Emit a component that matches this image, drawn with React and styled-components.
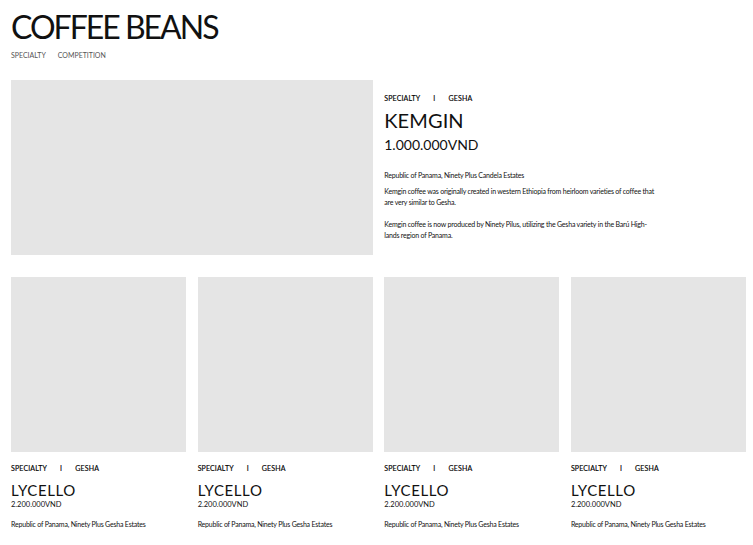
import React from "react";
import styled, { createGlobalStyle } from "styled-components";

const GlobalStyle = createGlobalStyle`
  * { box-sizing: border-box; }
  body {
    margin: 0;
    background: #fff;
    color: #111;
    font-family: Lato, "Noto Sans", sans-serif;
  }
`;

const Page = styled.div`
  padding: 0 7px 20px 11px;
`;

const Title = styled.h1`
  margin: 0;
  padding-top: 8px;
  font-size: 32px;
  line-height: 38px;
  font-weight: 400;
  letter-spacing: -2px;
`;

const Nav = styled.nav`
  display: flex;
  gap: 12px;
  margin-top: 5px;
  font-size: 7px;
  color: #555;
  text-transform: uppercase;
`;

const Grid = styled.div`
  display: grid;
  grid-template-columns: repeat(4, 1fr);
  column-gap: 11.5px;
  row-gap: 22px;
  margin-top: 21px;
`;

const Image = styled.div`
  background: #e5e5e5;
  aspect-ratio: ${(p) => (p.$wide ? "361 / 175" : "1 / 1")};
  grid-column: ${(p) => (p.$wide ? "span 2" : "auto")};
`;

const Detail = styled.div`
  grid-column: span 2;
  padding-top: 13px;
`;

const Tags = styled.div`
  display: flex;
  gap: 13px;
  font-size: 7px;
  font-weight: 400;
  color: #000;
  text-transform: uppercase;
  line-height: 10px;
  letter-spacing: 0.15px;
  -webkit-text-stroke: 0.15px #000;
`;

const Name = styled.h2`
  margin: ${(p) => (p.$big ? "5px 0 0" : "9px 0 0")};
  font-size: ${(p) => (p.$big ? "20px" : "15px")};
  line-height: ${(p) => (p.$big ? "24px" : "17px")};
  font-weight: 400;
  letter-spacing: ${(p) => (p.$big ? "0.1px" : "0.6px")};
`;

const Price = styled.div`
  margin-top: ${(p) => (p.$big ? "4px" : "1px")};
  font-size: ${(p) => (p.$big ? "14px" : "7.5px")};
  line-height: ${(p) => (p.$big ? "18px" : "10px")};
`;

const Text = styled.div`
  max-width: 274px;
  margin-top: ${(p) => p.$top || "0"};
  font-size: 7px;
  line-height: 11px;
  letter-spacing: -0.2px;

  p {
    margin: 0 0 11px;
  }
  p:first-child {
    margin-bottom: 5px;
  }
  p:last-child {
    margin-bottom: 0;
  }
`;

const Card = styled.div`
  display: flex;
  flex-direction: column;
`;

const CardBody = styled.div`
  padding-top: 11px;
`;

const products = [1, 2, 3, 4].map((id) => ({
  id,
  name: "LYCELLO",
  price: "2.200.000VND",
  origin: "Republic of Panama, Ninety Plus Gesha Estates",
}));

const TagRow = () => (
  <Tags>
    <span>Specialty</span>
    <span>I</span>
    <span>Gesha</span>
  </Tags>
);

export default function App() {
  return (
    <Page>
      <GlobalStyle />
      <Title>COFFEE BEANS</Title>
      <Nav>
        <span>Specialty</span>
        <span>Competition</span>
      </Nav>
      <Grid>
        <Image $wide />
        <Detail>
          <TagRow />
          <Name $big>KEMGIN</Name>
          <Price $big>1.000.000VND</Price>
          <Text $top="16px">
            <p>Republic of Panama, Ninety Plus Candela Estates</p>
            <p>
              Kemgin coffee was originally created in western Ethiopia from
              heirloom varieties of coffee that are very similar to Gesha.
            </p>
            <p>
              Kemgin coffee is now produced by Ninety Pilus, utilizing the Gesha
              variety in the Barú High-lands region of Panama.
            </p>
          </Text>
        </Detail>
        {products.map((p) => (
          <Card key={p.id}>
            <Image />
            <CardBody>
              <TagRow />
              <Name>{p.name}</Name>
              <Price>{p.price}</Price>
              <Text $top="9px">{p.origin}</Text>
            </CardBody>
          </Card>
        ))}
      </Grid>
    </Page>
  );
}
